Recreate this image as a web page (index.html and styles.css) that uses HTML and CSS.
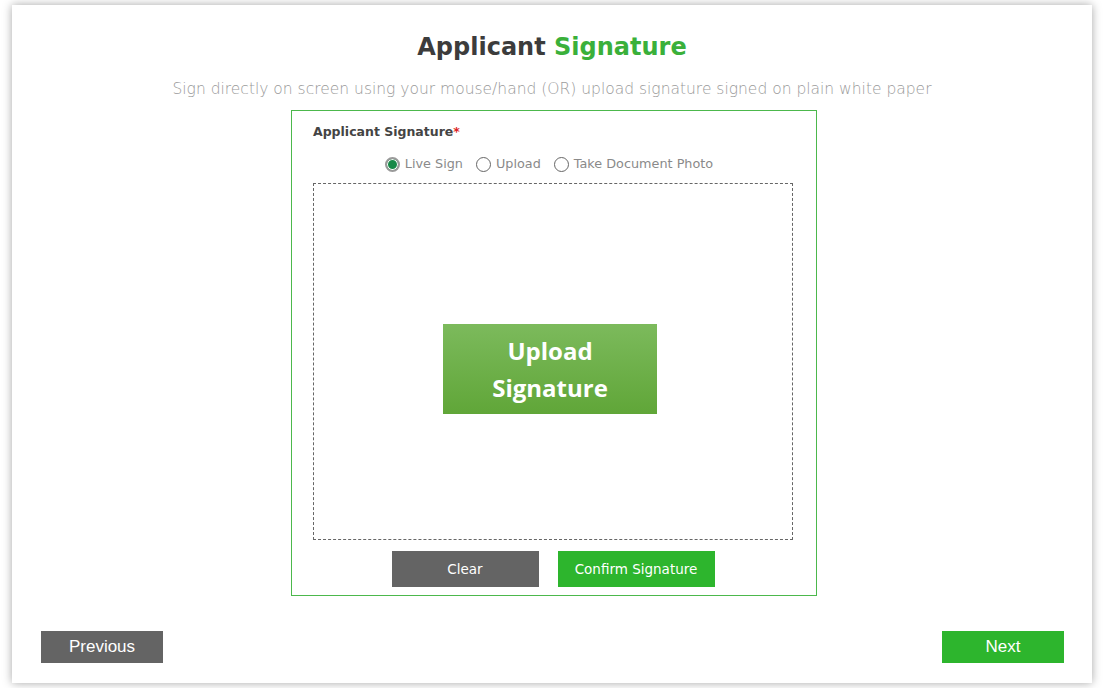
FILE: index.html
```html
<!DOCTYPE html>
<html>
<head>
<meta charset="utf-8">
<link rel="stylesheet" href="styles.css">
</head>
<body>
<div class="card">
  <h1 class="title">Applicant <span class="green">Signature</span></h1>
  <p class="subtitle">Sign directly on screen using your mouse/hand (OR) upload signature signed on plain white paper</p>
  <div class="sigbox">
    <div class="label">Applicant Signature<span class="req">*</span></div>
    <div class="radios">
      <label class="radio"><span class="dot checked"></span>Live Sign</label>
      <label class="radio"><span class="dot"></span>Upload</label>
      <label class="radio"><span class="dot"></span>Take Document Photo</label>
    </div>
    <div class="pad">
      <div class="upload">Upload<br>Signature</div>
    </div>
    <div class="actions">
      <button class="btn grey small">Clear</button>
      <button class="btn green-bg small confirm">Confirm Signature</button>
    </div>
  </div>
  <div class="nav">
    <button class="btn grey big">Previous</button>
    <button class="btn green-bg big">Next</button>
  </div>
</div>
</body>
</html>
```
FILE: styles.css
```css
html, body {
  margin: 0;
  padding: 0;
  background: #fff;
}
body {
  width: 1104px;
  height: 688px;
  overflow: hidden;
  font-family: "DejaVu Sans", sans-serif;
}
.card {
  margin: 5px 12px 0 12px;
  width: 1080px;
  height: 678px;
  background: #fff;
  box-shadow: 0 0 9px rgba(0, 0, 0, 0.35);
  box-sizing: border-box;
  padding-top: 25px;
  display: flex;
  flex-direction: column;
  align-items: center;
}
.title {
  margin: 0;
  font-size: 24px;
  line-height: 34px;
  font-weight: 600;
  color: #3c3c3c;
}
.green { color: #3ab03a; }
.subtitle {
  margin: 15px 0 0 0;
  font-size: 15.5px;
  line-height: 20px;
  font-weight: 300;
  color: #9a9a9a;
}
.sigbox {
  margin-top: 11px;
  margin-left: 4px;
  width: 526px;
  height: 486px;
  box-sizing: border-box;
  border: 1px solid #4cb84c;
  padding: 12px 21px 0 21px;
  display: flex;
  flex-direction: column;
}
.label {
  font-size: 12.5px;
  line-height: 18px;
  font-weight: 600;
  color: #444;
}
.req { color: #d22; }
.radios {
  margin-top: 14px;
  display: flex;
  justify-content: center;
  gap: 13px;
  font-size: 12.8px;
  line-height: 18px;
  color: #8a8a8a;
  padding-right: 10px;
}
.radio {
  display: flex;
  align-items: center;
  gap: 5px;
}
.dot {
  width: 15px;
  height: 15px;
  box-sizing: border-box;
  border: 1.5px solid #666;
  border-radius: 50%;
  background: #fff;
}
.dot.checked {
  border: 2px solid #9a9a9a;
  background: #178a48;
  box-shadow: inset 0 0 0 1px #fff;
}
.pad {
  margin-top: 10px;
  width: 480px;
  height: 357px;
  box-sizing: border-box;
  border: 1px dashed #666;
  display: flex;
  align-items: center;
  justify-content: center;
}
.upload {
  width: 214px;
  height: 90px;
  margin: 15px 6px 0 0;
  background: linear-gradient(#7cba5c, #60a638);
  color: #fff;
  font-family: "Open Sans", sans-serif;
  font-weight: 700;
  font-size: 24px;
  line-height: 37px;
  text-align: center;
  display: flex;
  align-items: center;
  justify-content: center;
}
.actions {
  margin-top: 11px;
  display: flex;
  justify-content: center;
  gap: 19px;
  padding-right: 2px;
}
.btn {
  border: none;
  color: #fff;
  font-family: "DejaVu Sans", sans-serif;
  padding: 0;
  cursor: pointer;
}
.grey { background: #646464; }
.green-bg { background: #2db52d; }
.small {
  width: 147px;
  height: 36px;
  font-size: 13.5px;
}
.small.confirm { width: 157px; }
.big {
  width: 122px;
  height: 32px;
  font-size: 17px;
  font-family: "Liberation Sans", sans-serif;
}
.nav {
  margin-top: 35px;
  align-self: stretch;
  display: flex;
  justify-content: space-between;
  padding: 0 28px 0 29px;
}
```
